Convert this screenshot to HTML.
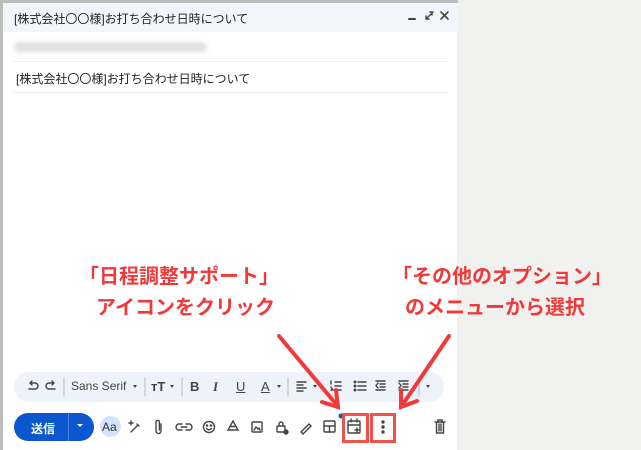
<!DOCTYPE html>
<html><head><meta charset="utf-8"><style>
*{margin:0;padding:0;box-sizing:border-box}
body{width:641px;height:450px;overflow:hidden;background:#f1f1ef;font-family:"Liberation Sans","Noto Sans CJK JP",sans-serif;position:relative}
.win{position:absolute;left:3px;top:3px;width:454px;height:447px;background:#fff}
.frame{position:absolute;left:0;top:0;width:458px;height:450px;border-left:3px solid #bdbdbd;border-top:3px solid #bdbdbd}
.hdr{position:absolute;left:3px;top:3px;width:454px;height:29px;background:#f2f6fc;font-size:12px;color:#1f1f1f;padding:7px 0 0 11px}
.blur{position:absolute;left:14px;top:42px;width:193px;height:10px;background:#e0e0e0;border-radius:5px;filter:blur(2px)}
.line{position:absolute;left:14px;width:434px;height:1px;background:#eceff1}
.subj{position:absolute;left:16px;top:70px;font-size:12px;color:#222}
.tb{position:absolute;left:14px;top:372px;width:430px;height:30px;background:#eef2fa;border-radius:15px;font-size:12px;color:#444}
.tb span{position:absolute;top:7px}
.send{position:absolute;left:14px;top:413px;width:80px;height:28px;background:#0b57d0;border-radius:14px;color:#fff;font-size:12px;font-weight:bold}
.red{color:#f03a3a;font-weight:bold;font-size:20px;position:absolute;white-space:nowrap}
.box{position:absolute;border:3px solid #f0514a}
</style></head><body>
<div class="frame"></div>
<div class="win"></div>
<div class="hdr">[株式会社〇〇様]お打ち合わせ日時について</div>
<div class="blur"></div>
<div class="line" style="top:61px"></div>
<div class="subj">[株式会社〇〇様]お打ち合わせ日時について</div>
<div class="line" style="top:92px"></div>
<div class="tb">
<span style="left:57px">Sans Serif</span>
<span style="left:176px;font-weight:bold;font-size:13px">B</span><span style="left:199px;font-style:italic;font-weight:bold;font-size:13px;font-family:'Liberation Serif'">I</span>
<span style="left:222px;text-decoration:underline;font-size:13px">U</span><span style="left:247px;text-decoration:underline;font-size:13px">A</span>
<span style="left:137px;font-weight:bold;font-size:13px">тT</span>
</div>
<div class="send"><span style="position:absolute;left:17px;top:7px">送信</span><span style="position:absolute;left:54px;top:0;height:28px;border-left:1px solid #4f86dd"></span></div>
<div style="position:absolute;left:100px;top:416px;width:21px;height:21px;border-radius:50%;background:#d3e3fd;font-size:12px;color:#333;padding:4px 0 0 2px">Aa</div>
<svg style="position:absolute;left:0;top:0" width="641" height="450">
<g stroke="#444" stroke-width="1.4" fill="none" stroke-linecap="round">
<line x1="409" y1="19" x2="415" y2="19" stroke-width="2"/>
<path d="M426 19 L431 14 M426 16 V19 H429 M432 12 V15 M430 12 H433"/>
<path d="M441 12 L448 19 M448 12 L441 19" stroke-width="1.6"/>
<path d="M29 389 H35 A3 3 0 0 0 35 383 H30 M30 383 L32 381 M30 383 L32 385"/>
<path d="M55 389 H49 A3 3 0 0 1 49 383 H54 M54 383 L52 381 M54 383 L52 385"/>
<line x1="64" y1="378" x2="64" y2="396" stroke="#ccc"/>
<line x1="145" y1="378" x2="145" y2="396" stroke="#ccc"/>
<line x1="182" y1="378" x2="182" y2="396" stroke="#ccc"/>
<line x1="288" y1="378" x2="288" y2="396" stroke="#ccc"/>
<line x1="419" y1="378" x2="419" y2="396" stroke="#ccc"/>
<path d="M297 382 H306 M297 385 H303 M297 388 H306 M297 391 H303"/>
<path d="M335 382 H341 M335 386 H341 M335 390 H341 M331 381 V384 M331 387 L333 390 H331"/>
<path d="M358 382 H366 M358 386 H366 M358 390 H366"/>
<circle cx="355" cy="382" r=".8"/><circle cx="355" cy="386" r=".8"/><circle cx="355" cy="390" r=".8"/>
<path d="M376 381 H385 M380 384 H385 M380 387 H385 M376 390 H385 M378 383 L376 385.5 L378 388"/>
<path d="M399 381 H408 M403 384 H408 M403 387 H408 M399 390 H408 M399 383 L401 385.5 L399 388"/>
<path d="M131 432 L138 425 M137 424 L139 426 M131 421 V425 M129 423 H133"/>
<path d="M161 424 V431 A2.5 2.5 0 0 1 156 431 V422 A1.7 1.7 0 0 1 159.4 422 V430"/>
<path d="M182 424 H179 A3 3 0 0 0 179 430 H182 M186 424 H189 A3 3 0 0 1 189 430 H186 M181 427 H187"/>
<circle cx="209" cy="427" r="5.5"/><path d="M206.5 428.5 Q209 431 211.5 428.5"/><circle cx="207" cy="425.5" r=".6"/><circle cx="211" cy="425.5" r=".6"/>
<path d="M233 421 L238 430 H228 Z M230 426.5 H236"/>
<rect x="252" y="422" width="10" height="10" rx="1"/><path d="M254 430 L256 427 L258 429 L259 428 L260 430"/>
<rect x="277" y="426" width="8" height="6" rx="1"/><path d="M279 426 V424 A2 2 0 0 1 283 424 V426"/><circle cx="286" cy="432" r="2" fill="#444"/>
<path d="M301 432 L309 424 L311 426 L303 434 Z"/>
<rect x="324" y="421" width="11" height="11" rx="1"/><path d="M324 426 H335 M329.5 426 V432"/>
<rect x="348" y="421" width="12" height="12" rx="1"/><path d="M348 425 H360 M351 419 V422 M357 419 V422 M355 430 H359 M357 428 V432"/>
<circle cx="383" cy="422" r="1" fill="#444"/><circle cx="383" cy="427" r="1" fill="#444"/><circle cx="383" cy="432" r="1" fill="#444"/>
<path d="M435 422 H445 M438 422 V420 H442 V422 M436.5 422 V433 H443.5 V422 M439 424 V431 M441 424 V431"/>
</g>
<g fill="#444"><path d="M133 385 l4 0 l-2 3z M170 385 l4 0 l-2 3z M277 385 l4 0 l-2 3z M313 385 l4 0 l-2 3z M426 385 l4 0 l-2 3z"/></g>
<path d="M77 424 l6 0 l-3 3z" fill="#fff"/>
<circle cx="341" cy="416" r="2.5" fill="#0b57d0"/>
<g stroke="#f03a3a" stroke-width="4" fill="none" stroke-linecap="round">
<line x1="279" y1="336" x2="336" y2="404"/><polyline points="322,402 338,407 336,390"/>
<line x1="449" y1="336" x2="403" y2="404"/><polyline points="401,390 401,407 417,401"/>
</g></svg>
<div class="box" style="left:342px;top:413px;width:27px;height:30px"></div>
<div class="box" style="left:370px;top:413px;width:26px;height:30px"></div>
<div class="red" style="left:79px;top:260px">「日程調整サポート」</div>
<div class="red" style="left:96px;top:291px">アイコンをクリック</div>
<div class="red" style="left:392px;top:260px">「その他のオプション」</div>
<div class="red" style="left:405px;top:291px">のメニューから選択</div>
</body></html>
